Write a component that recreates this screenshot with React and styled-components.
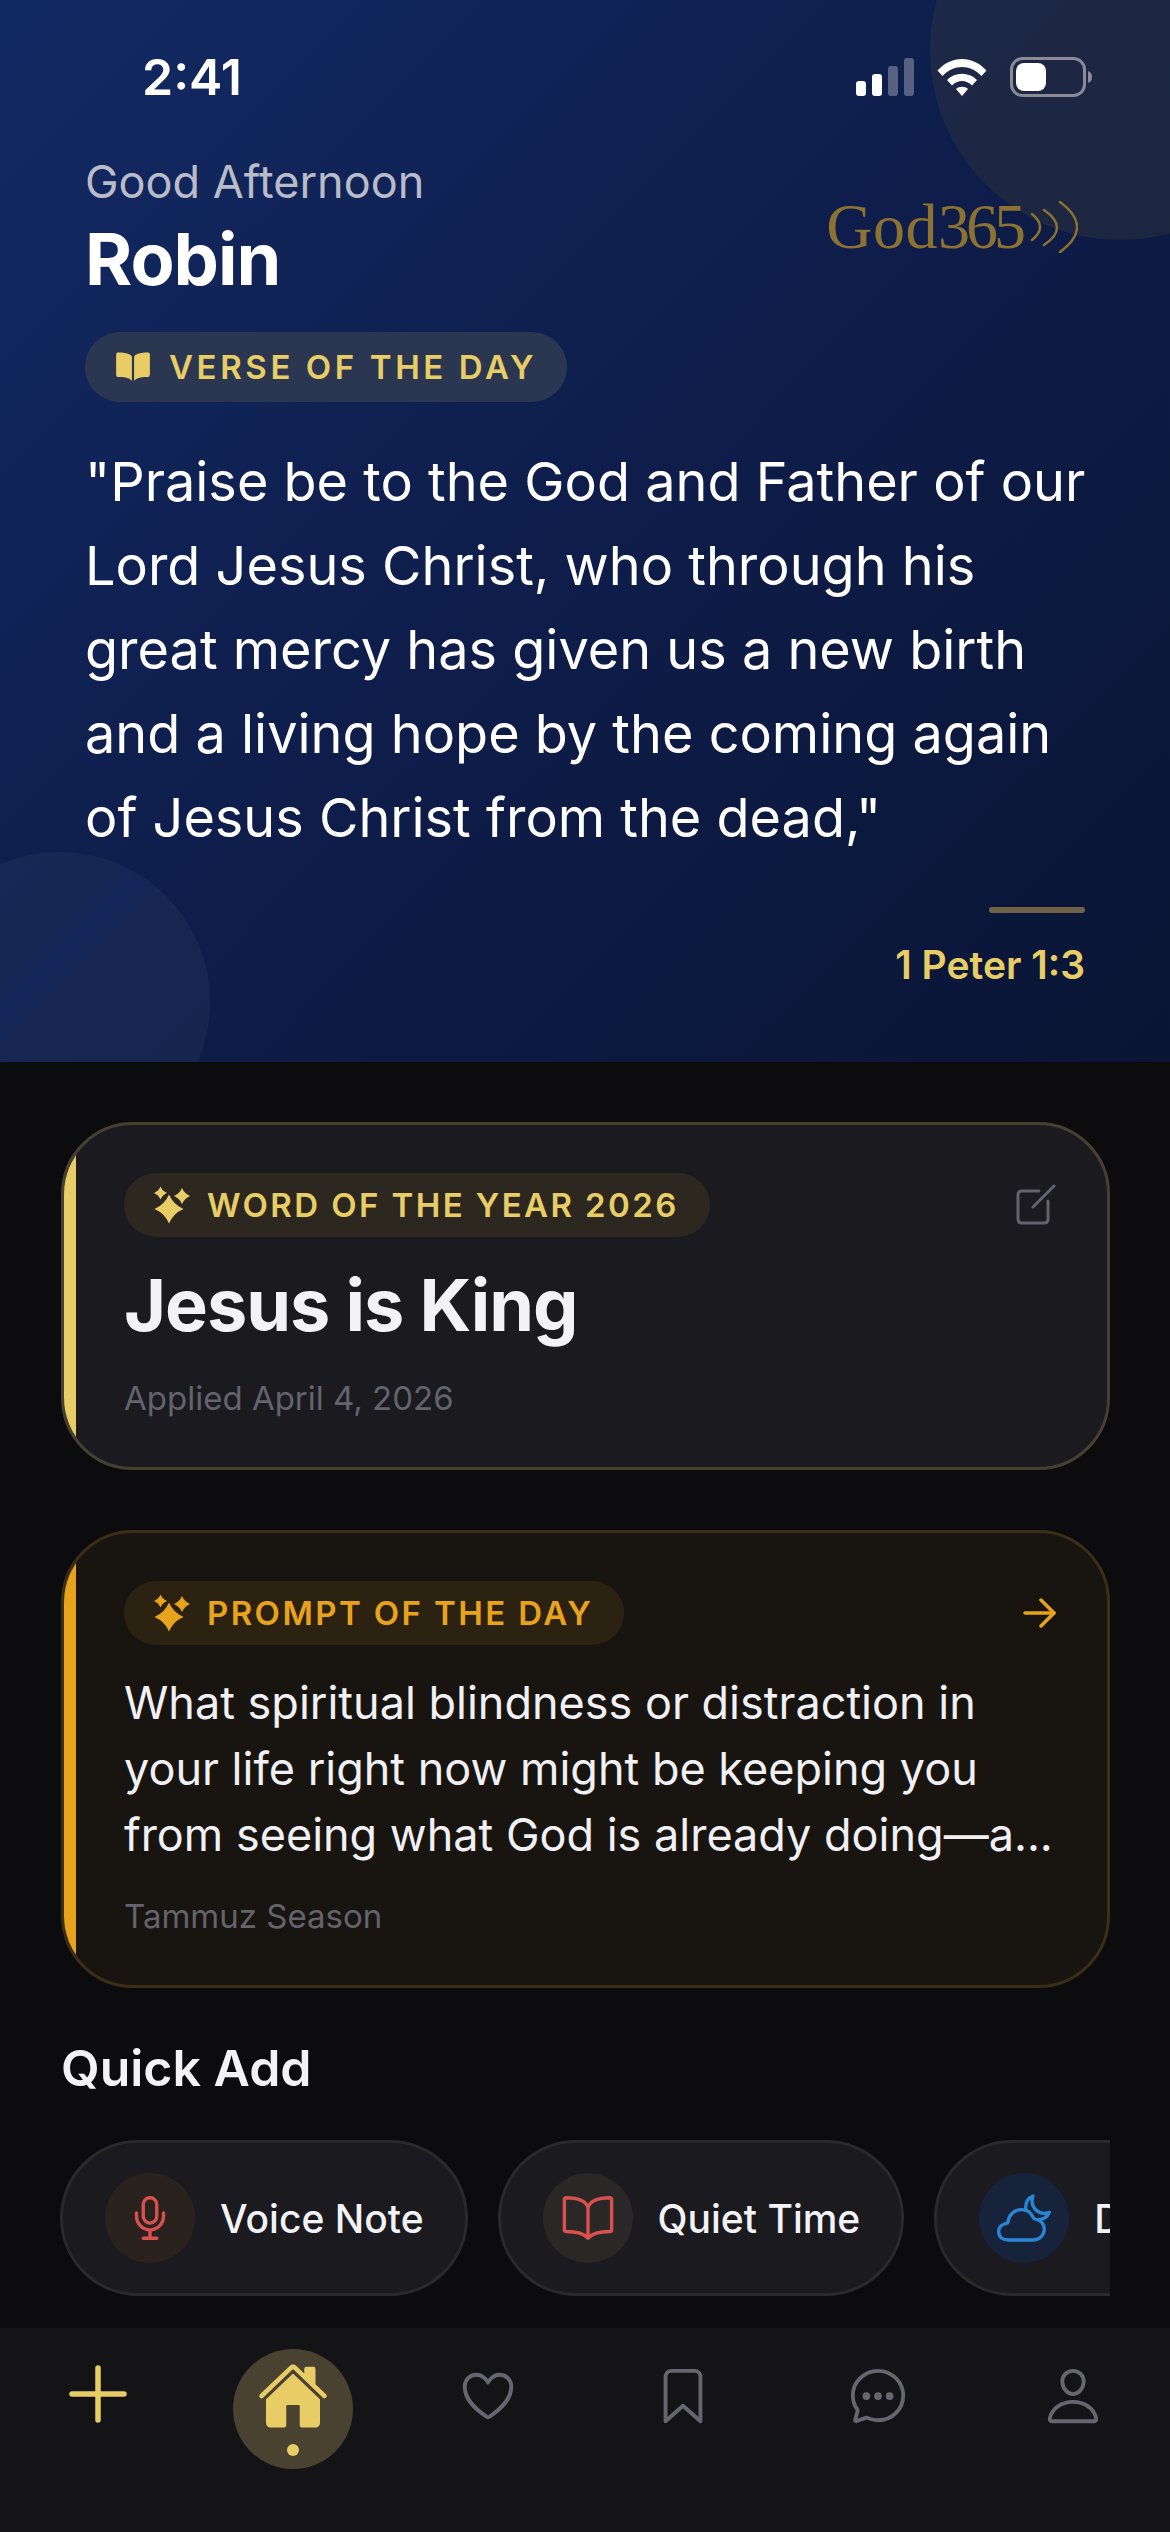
import styled, { createGlobalStyle } from 'styled-components';
import {
    IoBook,
    IoBookOutline,
    IoBookmarkOutline,
    IoChatbubbleEllipsesOutline,
    IoCloudyNightOutline,
    IoHeartOutline,
    IoHome,
    IoMicOutline,
    IoPersonOutline,
} from 'react-icons/io5';

const GOLD = '#e8cd66';
const AMBER = '#e8a31c';

const GlobalStyle = createGlobalStyle`
    * {
        box-sizing: border-box;
    }

    body {
        margin: 0;
        background: #0c0c0e;
        font-family: Inter, "Liberation Sans", sans-serif;
    }
`;

const Screen = styled.div`
    display: flex;
    flex-direction: column;
    width: 1170px;
    height: 2532px;
    overflow: hidden;
    background: #0c0c0e;
`;

const Hero = styled.header`
    position: relative;
    flex: none;
    height: 1062px;
    padding: 0 85px;
    overflow: hidden;
    background: linear-gradient(135deg, #122a64 0%, #0e1d4a 50%, #0a1534 100%);
`;

const Blob = styled.div`
    position: absolute;
    width: ${(p) => p.$size}px;
    height: ${(p) => p.$size}px;
    left: ${(p) => p.$left}px;
    top: ${(p) => p.$top}px;
    border-radius: 50%;
    background: ${(p) => p.$color};
`;

const HeroContent = styled.div`
    position: relative;
`;

const StatusBar = styled.div`
    display: flex;
    justify-content: space-between;
    align-items: center;
    height: 155px;
    padding: 0 0 2px 57px;
    margin-right: -9px;
`;

const Clock = styled.span`
    font-size: 50px;
    font-weight: 600;
    color: #fff;
`;

const StatusIcons = styled.div`
    display: flex;
    align-items: center;
    gap: 23px;
`;

const GreetingRow = styled.div`
    display: flex;
    justify-content: space-between;
    align-items: flex-start;
`;

const Greeting = styled.div`
    font-size: 45px;
    line-height: 54px;
    color: #b9bcc8;
`;

const Name = styled.h1`
    margin: 6px 0 0;
    font-size: 72px;
    line-height: 87px;
    font-weight: 700;
    letter-spacing: -1px;
    color: #fff;
`;

const Logo = styled.div`
    display: flex;
    align-items: center;
    gap: 8px;
    margin: 37px 7px 0 0;
    color: #8c7232;
`;

const LogoText = styled.span`
    font-family: "Liberation Serif", serif;
    font-size: 64px;
    line-height: 70px;
    letter-spacing: 0.5px;
`;

const LogoDigits = styled.span`
    letter-spacing: -4px;
`;

const Pill = styled.div`
    display: inline-flex;
    align-items: center;
    height: ${(p) => p.$height}px;
    margin-top: ${(p) => p.$top || 0}px;
    padding: 0 ${(p) => p.$paddingRight}px 0 30px;
    gap: ${(p) => p.$gap}px;
    border-radius: 40px;
    background: ${(p) => p.$bg};
    color: ${(p) => p.$color};
    font-size: ${(p) => p.$fontSize}px;
    font-weight: 600;
    letter-spacing: ${(p) => p.$spacing}px;
`;

const VerseText = styled.p`
    margin: 38px -10px 0 0;
    font-size: 54px;
    line-height: 84px;
    white-space: nowrap;
    color: #fff;
`;

const Reference = styled.div`
    display: flex;
    flex-direction: column;
    align-items: flex-end;
    margin-top: 47px;
`;

const Rule = styled.div`
    width: 96px;
    height: 6px;
    border-radius: 3px;
    background: #6f6248;
`;

const RefText = styled.div`
    margin-top: 28px;
    font-size: 39px;
    line-height: 48px;
    font-weight: 600;
    color: ${GOLD};
`;

const Main = styled.main`
    flex: 1;
    min-height: 0;
    padding: 60px 60px 0 61px;
`;

const Card = styled.section`
    position: relative;
    margin-bottom: 60px;
    padding: 48px 50px 48px 60px;
    border: 3px solid ${(p) => p.$border};
    border-radius: 72px;
    overflow: hidden;
    background: ${(p) => p.$bg};

    &::before {
        content: '';
        position: absolute;
        left: -3px;
        top: -3px;
        bottom: -3px;
        width: 15px;
        background: ${(p) => p.$accent};
    }
`;

const CardTop = styled.div`
    display: flex;
    justify-content: space-between;
    align-items: center;
`;

const CardTitle = styled.h2`
    margin: 24px 0 0;
    font-size: 72px;
    line-height: 87px;
    font-weight: 700;
    letter-spacing: -1px;
    color: #f2f2f7;
`;

const Meta = styled.div`
    margin-top: ${(p) => p.$top}px;
    font-size: 33px;
    line-height: 41px;
    color: #63636c;
`;

const PromptText = styled.p`
    margin: 25px 0 0;
    font-size: 45px;
    line-height: 66px;
    white-space: nowrap;
    color: #f0f0f5;
`;

const SectionTitle = styled.h3`
    margin: -10px 0 41px;
    font-size: 50px;
    line-height: 61px;
    font-weight: 600;
    color: #f2f2f7;
`;

const QuickRow = styled.div`
    display: flex;
    gap: 30px;
    overflow: hidden;
    margin-left: -1px;
`;

const QuickButton = styled.div`
    flex: none;
    display: flex;
    align-items: center;
    gap: 25px;
    height: 156px;
    padding: 0 41px 0 42px;
    border: 3px solid #2a2a2e;
    border-radius: 78px;
    background: #1a1a1f;
    font-size: 39px;
    font-weight: 500;
    color: #f2f2f7;
`;

const QuickIcon = styled.span`
    display: flex;
    align-items: center;
    justify-content: center;
    width: 90px;
    height: 90px;
    border-radius: 50%;
    background: ${(p) => p.$bg};
    color: ${(p) => p.$color};
`;

const Nav = styled.nav`
    flex: none;
    display: grid;
    grid-template-columns: repeat(6, 195px);
    height: 204px;
    padding-top: 21px;
    background: #141416;
`;

const NavItem = styled.div`
    display: flex;
    justify-content: center;
    height: 120px;
    align-items: ${(p) => (p.$active ? 'center' : 'flex-start')};
    padding-top: ${(p) => (p.$active ? 0 : 16)}px;
    color: #66666f;
`;

const HomeBubble = styled.div`
    display: flex;
    flex-direction: column;
    align-items: center;
    width: 120px;
    height: 120px;
    padding-top: 11px;
    border-radius: 50%;
    background: #4a4230;
    color: ${GOLD};
`;

const HomeDot = styled.span`
    width: 12px;
    height: 12px;
    margin-top: 12px;
    border-radius: 50%;
    background: ${GOLD};
`;

const SignalIcon = () => (
    <svg width="58" height="38" viewBox="0 0 58 38">
        <rect x="0" y="23" width="10" height="15" rx="3" fill="#fff" />
        <rect x="16" y="16" width="10" height="22" rx="3" fill="#fff" />
        <rect x="32" y="8" width="10" height="30" rx="3" fill="#fff" fillOpacity="0.3" />
        <rect x="48" y="0" width="10" height="38" rx="3" fill="#fff" fillOpacity="0.3" />
    </svg>
);

const WifiIcon = () => (
    <svg width="50" height="38" viewBox="0 0 50 38">
        <path d="M0.5 12.5 C14 -3 36 -3 49.500 12.5 L44.500 18 C33 6 17 6 5.500 18 Z" fill="#fff" />
        <path d="M10 22 C18 13.500 32 13.500 40 22 L35 27.500 C29.500 21.500 20.500 21.500 15 27.500 Z" fill="#fff" />
        <path d="M19 31 C22 28 28 28 31 31 L25 38 Z" fill="#fff" />
    </svg>
);

const BatteryIcon = () => (
    <svg width="84" height="40" viewBox="0 0 84 40">
        <rect x="1.500" y="1.500" width="73" height="37" rx="11" fill="none" stroke="#8b8b98" strokeWidth="3" />
        <rect x="6" y="6" width="30" height="28" rx="8" fill="#fff" />
        <path d="M78 14 C81 15 82 17 82 20 C82 23 81 25 78 26 Z" fill="#8b8b98" />
    </svg>
);

const WavesIcon = () => (
    <svg width="48" height="52" viewBox="0 0 48 52" fill="none" stroke="#8c7232" strokeWidth="2.500" strokeLinecap="round">
        <path d="M2 13 Q18 26 2 39" />
        <path d="M14 9 Q40 26.500 14 44" />
        <path d="M30 1 Q64 26 30 51" />
    </svg>
);

const EditIcon = () => (
    <svg width="42" height="42" viewBox="0 0 42 42" fill="none" stroke="#63636c" strokeWidth="3" strokeLinecap="round">
        <path d="M24 7 H7 C4.500 7 3 8.500 3 11 V35 C3 37.500 4.500 39 7 39 H29 C31.500 39 33 37.500 33 35 V17" />
        <path d="M18 23 L39 2" />
    </svg>
);

const ArrowIcon = () => (
    <svg width="34" height="30" viewBox="0 0 34 30" fill="none" stroke={AMBER} strokeWidth="3.500" strokeLinecap="round" strokeLinejoin="round">
        <path d="M2 15 H31" />
        <path d="M18 2 L31 15 L18 28" />
    </svg>
);

const PlusIcon = () => (
    <svg width="58" height="58" viewBox="0 0 58 58" fill="none" stroke={GOLD} strokeWidth="5.500" strokeLinecap="round">
        <path d="M29 3 V55" />
        <path d="M3 29 H55" />
    </svg>
);

// four point star, control points pulled in towards the centre
const starPath = (cx, cy, r) => {
    const k = r * 0.3;
    return `M${cx} ${cy - r} Q${cx + k} ${cy - k} ${cx + r} ${cy} Q${cx + k} ${cy + k} ${cx} ${cy + r} Q${cx - k} ${cy + k} ${cx - r} ${cy} Q${cx - k} ${cy - k} ${cx} ${cy - r} Z`;
};

const SparkleIcon = () => (
    <svg width="36" height="38" viewBox="0 0 36 38" fill="currentColor">
        <path d={starPath(15, 23, 14.5)} />
        <path d={starPath(6.500, 7, 6.500)} />
        <path d={starPath(28, 10, 8)} />
    </svg>
);

const App = () => (
    <Screen>
        <GlobalStyle />
        <Hero>
            <Blob $size={380} $left={930} $top={-140} $color="rgba(232, 184, 0, 0.07)" />
            <Blob
                $size={300}
                $left={-90}
                $top={852}
                $color="linear-gradient(135deg, rgba(255, 255, 255, 0.035) 38%, rgba(30, 60, 130, 0.25) 43%, rgba(255, 255, 255, 0.04) 48%)"
            />
            <HeroContent>
                <StatusBar>
                    <Clock>2:41</Clock>
                    <StatusIcons>
                        <SignalIcon />
                        <WifiIcon />
                        <BatteryIcon />
                    </StatusIcons>
                </StatusBar>
                <GreetingRow>
                    <div>
                        <Greeting>Good Afternoon</Greeting>
                        <Name>Robin</Name>
                    </div>
                    <Logo>
                        <LogoText>
                            God<LogoDigits>365</LogoDigits>
                        </LogoText>
                        <WavesIcon />
                    </Logo>
                </GreetingRow>
                <Pill $top={30} $height={70} $paddingRight={30} $gap={18} $bg="#2b3750" $color={GOLD} $fontSize={33} $spacing={3.6}>
                    <IoBook size={36} />
                    VERSE OF THE DAY
                </Pill>
                <VerseText>
                    "Praise be to the God and Father of our
                    <br />
                    Lord Jesus Christ, who through his
                    <br />
                    great mercy has given us a new birth
                    <br />
                    and a living hope by the coming again
                    <br />
                    of Jesus Christ from the dead,"
                </VerseText>
                <Reference>
                    <Rule />
                    <RefText>1 Peter 1:3</RefText>
                </Reference>
            </HeroContent>
        </Hero>
        <Main>
            <Card $bg="#1a1a1f" $border="#464031" $accent={GOLD}>
                <CardTop>
                    <Pill $height={64} $paddingRight={31} $gap={17} $bg="#2c2820" $color={GOLD} $fontSize={33} $spacing={2.4}>
                        <SparkleIcon />
                        WORD OF THE YEAR 2026
                    </Pill>
                    <EditIcon />
                </CardTop>
                <CardTitle>Jesus is King</CardTitle>
                <Meta $top={30}>Applied April 4, 2026</Meta>
            </Card>
            <Card $bg="#181510" $border="#3a2e17" $accent={AMBER}>
                <CardTop>
                    <Pill $height={64} $paddingRight={31} $gap={17} $bg="#2c2212" $color={AMBER} $fontSize={33} $spacing={2.4}>
                        <SparkleIcon />
                        PROMPT OF THE DAY
                    </Pill>
                    <ArrowIcon />
                </CardTop>
                <PromptText>
                    What spiritual blindness or distraction in
                    <br />
                    your life right now might be keeping you
                    <br />
                    from seeing what God is already doing—a...
                </PromptText>
                <Meta $top={28}>Tammuz Season</Meta>
            </Card>
            <SectionTitle>Quick Add</SectionTitle>
            <QuickRow>
                <QuickButton>
                    <QuickIcon $bg="#2a231d" $color="#d9514f">
                        <IoMicOutline size={54} />
                    </QuickIcon>
                    Voice Note
                </QuickButton>
                <QuickButton>
                    <QuickIcon $bg="#2a2826" $color="#d9514f">
                        <IoBookOutline size={54} />
                    </QuickIcon>
                    Quiet Time
                </QuickButton>
                <QuickButton>
                    <QuickIcon $bg="#16233b" $color="#2a86d4">
                        <IoCloudyNightOutline size={54} />
                    </QuickIcon>
                    Dream
                </QuickButton>
            </QuickRow>
        </Main>
        <Nav>
            <NavItem>
                <PlusIcon />
            </NavItem>
            <NavItem $active>
                <HomeBubble>
                    <IoHome size={72} />
                    <HomeDot />
                </HomeBubble>
            </NavItem>
            <NavItem>
                <IoHeartOutline size={62} />
            </NavItem>
            <NavItem>
                <IoBookmarkOutline size={62} />
            </NavItem>
            <NavItem>
                <IoChatbubbleEllipsesOutline size={62} />
            </NavItem>
            <NavItem>
                <IoPersonOutline size={62} />
            </NavItem>
        </Nav>
    </Screen>
);

export default App;
